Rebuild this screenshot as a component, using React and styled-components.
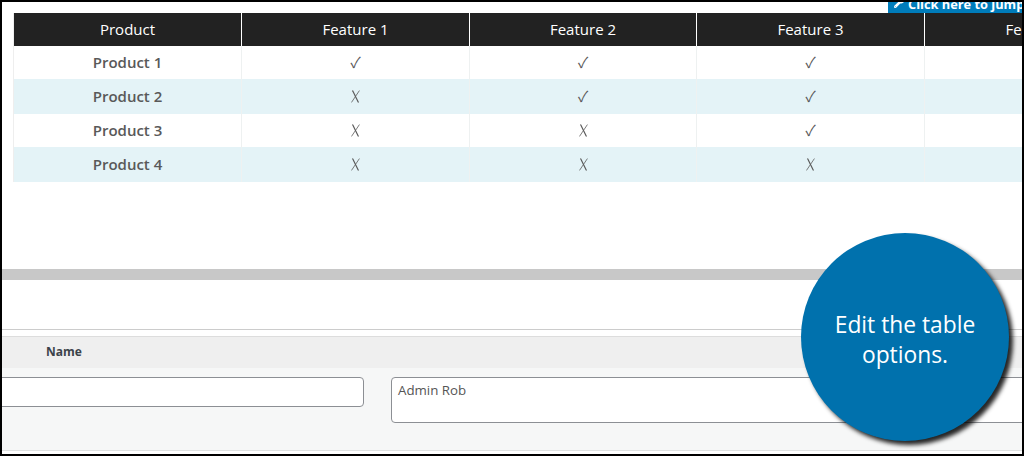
import React from 'react';
import styled, { createGlobalStyle } from 'styled-components';
import { FaWrench } from 'react-icons/fa';

const GlobalStyle = createGlobalStyle`
  body {
    margin: 0;
    background: #000;
    font-family: "Open Sans", "Liberation Sans", sans-serif;
  }
`;

const Frame = styled.div`
  background: #fff;
  border: 2px solid #000;
  box-sizing: border-box;
  height: 456px;
  overflow: hidden;
  position: relative;
  width: 1024px;
`;

const BannerRow = styled.div`
  display: flex;
  height: 11px;
  justify-content: flex-end;
`;

const Banner = styled.div`
  align-items: flex-start;
  background: #007cba;
  box-sizing: border-box;
  color: #fff;
  display: flex;
  font-size: 12.8px;
  font-weight: 700;
  gap: 4px;
  height: 11px;
  line-height: 14px;
  overflow: hidden;
  padding: 0 0 0 6px;
  white-space: nowrap;
  width: 134px;

  span {
    margin-top: -5px;
  }

  svg {
    flex: none;
    font-size: 10px;
    margin-top: -4px;
  }
`;

const TableWrap = styled.div`
  border-left: 1px solid #eee;
  margin-left: 11px;
  overflow: hidden;
`;

const Row = styled.div`
  background: ${props => (props.tinted ? '#e4f3f7' : '#fff')};
  display: grid;
  grid-template-columns: 228px 228px 227px 228px 228px;
  height: ${props => (props.tinted ? 35 : 33)}px;
`;

const HeadRow = styled(Row)`
  background: #222;
  color: #fff;
  height: 33px;
`;

const HeadCell = styled.div`
  align-items: center;
  border-right: 1px solid #fff;
  display: flex;
  font-size: 15px;
  font-weight: 500;
  justify-content: center;
  padding-bottom: 2px;
`;

const NameCell = styled.div`
  align-items: center;
  border-right: 1px solid #eef1f1;
  color: #595959;
  display: flex;
  font-size: 15px;
  font-weight: 540;
  justify-content: center;
  padding-bottom: 2px;
`;

const MarkCell = styled(NameCell)`
  font-family: "Noto Sans CJK JP", "DejaVu Sans", sans-serif;
  font-weight: 400;
`;

const CrossIcon = styled.svg`
  display: block;
  height: 13px;
  margin-top: 2px;
  width: 9px;
`;

const Band = styled.div`
  background: #c8c8c8;
  height: 11px;
  margin-top: 87px;
`;

const Spacer = styled.div`
  border-bottom: 1px solid #ccc;
  height: 49px;
`;

const FieldHead = styled.div`
  align-items: center;
  background: #efefef;
  border-top: 1px solid #ddd;
  box-sizing: border-box;
  color: #3c434a;
  display: flex;
  font-size: 12px;
  font-weight: 700;
  height: 32px;
  margin-top: 6px;
  padding-bottom: 2px;
  padding-left: 44px;
`;

const FieldBody = styled.div`
  align-items: flex-start;
  background: #f6f7f7;
  border-bottom: 1px solid #dfe1e1;
  box-sizing: border-box;
  display: flex;
  gap: 27px;
  height: 83px;
  margin-left: -10px;
  padding-top: 9px;
`;

const TextInput = styled.input`
  background: #fff;
  border: 1px solid #8c8f94;
  border-radius: 4px;
  box-sizing: border-box;
  flex: none;
  height: 30px;
  width: 372px;
`;

const TextArea = styled.textarea`
  background: #fff;
  border: 1px solid #8c8f94;
  border-radius: 4px;
  box-sizing: border-box;
  color: #555;
  flex: none;
  font-family: "Open Sans", sans-serif;
  font-size: 13.3px;
  height: 46px;
  line-height: 18px;
  padding: 3px 6px;
  resize: none;
  width: 700px;
`;

const Callout = styled.div`
  align-items: center;
  background: #0071ad;
  border-radius: 50%;
  box-shadow: 4px 4px 4px rgba(0, 0, 0, 0.85);
  box-sizing: border-box;
  color: #fff;
  display: flex;
  font-size: 22.8px;
  height: 208px;
  justify-content: center;
  left: 799px;
  line-height: 30px;
  padding-top: 6px;
  position: absolute;
  text-align: center;
  top: 231px;
  width: 208px;
`;

const Cross = () => (
  <CrossIcon viewBox="0 0 9 13" fill="none" stroke="#5a5a5a" strokeLinecap="round">
    <path d="M1.8 0.9 L7.2 12.1" strokeWidth="1.2" />
    <path d="M8.2 0.9 L0.7 12.1" strokeWidth="0.8" />
  </CrossIcon>
);

const columns = ['Product', 'Feature 1', 'Feature 2', 'Feature 3', 'Feature 4'];

const products = [
  { name: 'Product 1', marks: [true, true, true] },
  { name: 'Product 2', marks: [false, true, true] },
  { name: 'Product 3', marks: [false, false, true] },
  { name: 'Product 4', marks: [false, false, false] },
];

const App = () => (
  <Frame>
    <GlobalStyle />
    <BannerRow>
      <Banner>
        <FaWrench />
        <span>Click here to jump</span>
      </Banner>
    </BannerRow>
    <TableWrap>
      <HeadRow>
        {columns.map(column => <HeadCell key={column}>{column}</HeadCell>)}
      </HeadRow>
      {products.map((product, index) => (
        <Row key={product.name} tinted={index % 2 === 1}>
          <NameCell>{product.name}</NameCell>
          {product.marks.map((mark, markIndex) => (
            <MarkCell key={markIndex}>{mark ? '✓' : <Cross />}</MarkCell>
          ))}
          <MarkCell />
        </Row>
      ))}
    </TableWrap>
    <Band />
    <Spacer />
    <FieldHead>Name</FieldHead>
    <FieldBody>
      <TextInput readOnly />
      <TextArea readOnly value="Admin Rob" />
    </FieldBody>
    <Callout>Edit the table<br />options.</Callout>
  </Frame>
);

export default App;
